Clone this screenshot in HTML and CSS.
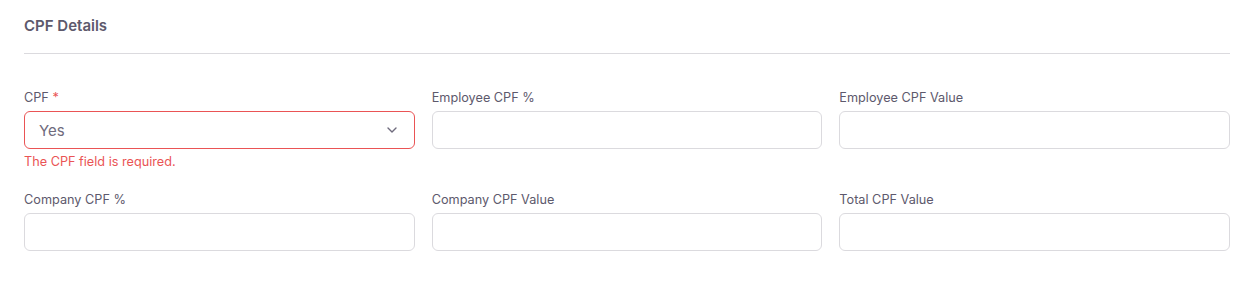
FILE: index.html
```html
<!DOCTYPE html>
<html>
<head>
    <meta charset="UTF-8">
    <title>CPF Details</title>
    <link rel="stylesheet" href="styles.css">
</head>
<body>
    <div class="card">
        <h5 class="card-title">CPF Details</h5>
        <hr class="divider">

        <div class="form-grid">
            <div class="field">
                <label class="field-label">CPF <span class="req">*</span></label>
                <div class="select invalid">
                    <span class="select-value">Yes</span>
                    <svg class="chevron" viewBox="0 0 12 8" width="12" height="8">
                        <path d="M2 2 L6 6 L10 2" fill="none" stroke="#6f6b7d" stroke-width="1.4" stroke-linecap="round" stroke-linejoin="round"></path>
                    </svg>
                </div>
                <div class="error-text">The CPF field is required.</div>
            </div>
            <div class="field">
                <label class="field-label">Employee CPF %</label>
                <input class="input" type="text">
            </div>
            <div class="field">
                <label class="field-label">Employee CPF Value</label>
                <input class="input" type="text">
            </div>

            <div class="field">
                <label class="field-label">Company CPF %</label>
                <input class="input" type="text">
            </div>
            <div class="field">
                <label class="field-label">Company CPF Value</label>
                <input class="input" type="text">
            </div>
            <div class="field">
                <label class="field-label">Total CPF Value</label>
                <input class="input" type="text">
            </div>
        </div>
    </div>
</body>
</html>
```

FILE: styles.css
```css
body {
    margin: 0;
    background-color: #ffffff;
    font-family: Inter, "Noto Sans", Arial, sans-serif;
    color: #5d596c;
}

.card {
    padding: 16px 20px 0 24px;
}

.card-title {
    margin: 0;
    font-size: 15px;
    font-weight: 600;
    line-height: 20px;
    color: #5d596c;
}

.divider {
    border: none;
    border-top: 1px solid #dbdade;
    margin: 17px 0 36px 0;
}

.form-grid {
    display: grid;
    grid-template-columns: repeat(3, 1fr);
    column-gap: 17px;
    row-gap: 23px;
    align-items: start;
}

.field {
    display: flex;
    flex-direction: column;
}

.field-label {
    font-size: 12.7px;
    line-height: 15px;
    color: #5d596c;
    margin-bottom: 6px;
}

.req {
    color: #ea5455;
}

.input {
    box-sizing: border-box;
    height: 38px;
    width: 100%;
    border: 1px solid #dbdade;
    border-radius: 6px;
    padding: 0 14px;
    font-family: inherit;
    font-size: 15px;
    background: #fff;
    outline: none;
}

.select {
    box-sizing: border-box;
    height: 38px;
    border: 1px solid #dbdade;
    border-radius: 6px;
    padding: 0 16px 0 14px;
    display: flex;
    align-items: center;
    justify-content: space-between;
}

.select.invalid {
    border-color: #ea5455;
}

.select-value {
    font-size: 15px;
    color: #6f6b7d;
}

.chevron {
    display: block;
}

.error-text {
    margin-top: 5px;
    font-size: 12.7px;
    line-height: 15px;
    color: #ea5455;
}
```
